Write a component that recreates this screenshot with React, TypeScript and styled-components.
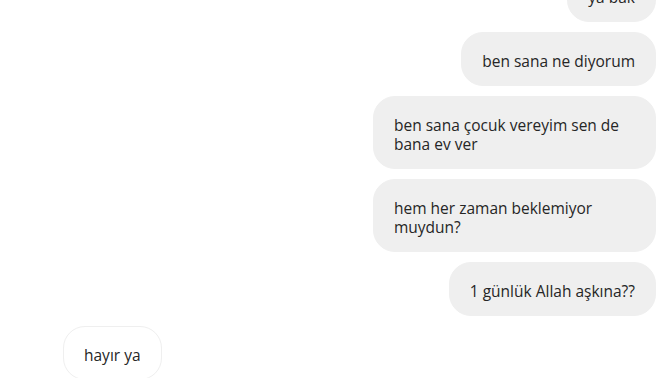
import React from 'react';
import styled, { createGlobalStyle } from 'styled-components';

const GlobalStyle = createGlobalStyle`
  html, body {
    margin: 0;
    padding: 0;
    background: #ffffff;
    overflow: hidden;
  }
  body {
    font-family: "Open Sans", "Noto Sans", Arial, sans-serif;
  }
`;

const Thread = styled.div`
  width: 672px;
  height: 378px;
  overflow: hidden;
  background: #fff;
`;

const List = styled.div`
  display: flex;
  flex-direction: column;
  gap: 10px;
  margin-top: -32px;
  padding: 0 16px 0 63px;
`;

const Row = styled.div<{ $mine?: boolean }>`
  display: flex;
  justify-content: ${(p) => (p.$mine ? 'flex-end' : 'flex-start')};
`;

// text sits a little low in the bubble, like the original font
const Bubble = styled.div<{ $mine?: boolean }>`
  max-width: 241px;
  padding: 19px 20px 14px;
  border-radius: 22px;
  font-size: 15.5px;
  line-height: 19px;
  color: #262626;
  background: ${(p) => (p.$mine ? '#efefef' : '#ffffff')};
  border: 1px solid #efefef;
  word-wrap: break-word;
`;

const messages = [
  { mine: true, text: 'ya bak' },
  { mine: true, text: 'ben sana ne diyorum' },
  { mine: true, text: 'ben sana çocuk vereyim sen de bana ev ver' },
  { mine: true, text: 'hem her zaman beklemiyor muydun?' },
  { mine: true, text: '1 günlük Allah aşkına??' },
  { mine: false, text: 'hayır ya' },
];

const App = () => {
  return (
    <>
      <GlobalStyle />
      <Thread>
        <List>
          {messages.map((m, i) => (
            <Row key={i} $mine={m.mine}>
              <Bubble $mine={m.mine}>{m.text}</Bubble>
            </Row>
          ))}
        </List>
      </Thread>
    </>
  );
};

export default App;
